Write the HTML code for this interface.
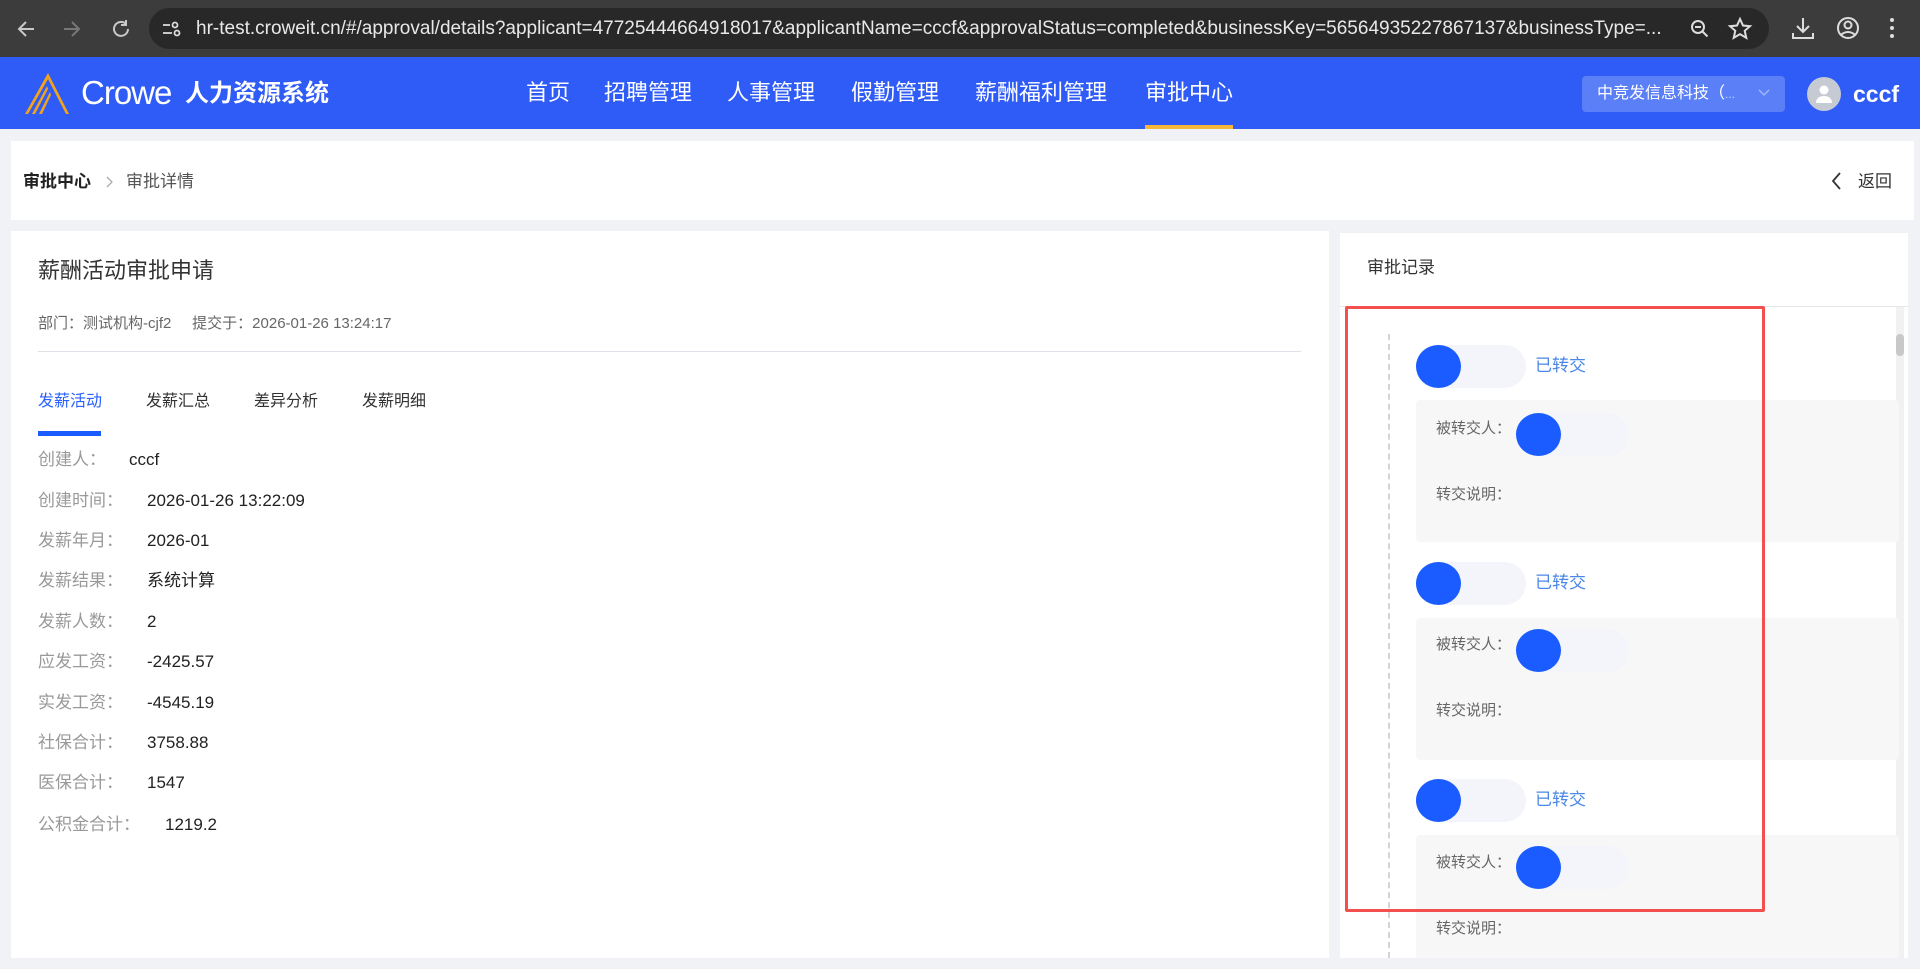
<!DOCTYPE html>
<html><head><meta charset="utf-8"><style>
*{margin:0;padding:0;box-sizing:border-box}
body{width:1920px;height:969px;overflow:hidden;background:#f0f2f5;font-family:"Liberation Sans","Noto Sans CJK SC",sans-serif;position:relative}
.a{position:absolute;white-space:nowrap}
.chrome{left:0;top:0;width:1920px;height:57px;background:#3c3c3c}
.url{left:149px;top:8px;width:1620px;height:41px;border-radius:21px;background:#282828}
.nav{left:0;top:57px;width:1920px;height:72px;background:#2f5bf6}
.mi{top:78px;color:#fff;font-size:22px;line-height:30px}
.card{background:#fff}
.lab{left:38px;color:#999;font-size:17px;line-height:24px}
.val{color:#222;font-size:17px;line-height:24px}
.pill{width:110px;height:43px;border-radius:22px;background:#f3f5fa}
.pill i{position:absolute;left:0;top:0;width:45px;height:43px;border-radius:50%;background:#1a5cff}
.gbox{left:1416px;width:483px;background:#f7f7f7;border-radius:4px}
.gl{color:#666;font-size:15px;line-height:20px}
.st{color:#4a87e6;font-size:17px;line-height:24px}
</style></head><body>
<div class="a chrome"></div>
<svg class="a" style="left:14px;top:16px" width="130" height="26" viewBox="0 0 130 26"><g fill="none" stroke="#c8c8c8" stroke-width="2"><path d="M20 13H6M12 6l-7 7 7 7"/><path d="M50 13h14M58 6l7 7-7 7" stroke="#777"/><path d="M112 8a7 7 0 1 0 2 5M112 4v5h-5"/></g></svg>
<div class="a url"></div>
<svg class="a" style="left:160px;top:18px" width="22" height="22" viewBox="0 0 22 22"><g fill="none" stroke="#ddd" stroke-width="1.8"><path d="M3 7h7M3 15h9"/><circle cx="15" cy="7" r="2.5"/><circle cx="17" cy="15" r="2.5"/></g></svg>
<div class="a" style="left:196px;top:16px;color:#e8e8e8;font-size:19px;line-height:26px">hr-test.croweit.cn/#/approval/details?applicant=47725444664918017&amp;applicantName=cccf&amp;approvalStatus=completed&amp;businessKey=56564935227867137&amp;businessType=...</div>
<svg class="a" style="left:1688px;top:16px" width="100" height="26" viewBox="0 0 100 26"><g fill="none" stroke="#ddd" stroke-width="2"><circle cx="10" cy="11" r="6"/><path d="M14.5 15.5l5 5M7 11h6"/><path d="M52 3l3 6.5 7 .7-5.3 4.6 1.6 7-6.3-3.7-6.3 3.7 1.6-7-5.3-4.6 7-.7z"/></g></svg>
<svg class="a" style="left:1788px;top:14px" width="120" height="30" viewBox="0 0 120 30"><g fill="none" stroke="#ddd" stroke-width="2"><path d="M15 4v14M9 12l6 6 6-6M5 19v5h20v-5"/><circle cx="60" cy="14" r="10"/><circle cx="60" cy="11" r="3.5"/><path d="M53 21c4-4 10-4 14 0"/></g><g fill="#ddd"><circle cx="104" cy="6" r="2"/><circle cx="104" cy="14" r="2"/><circle cx="104" cy="22" r="2"/></g></svg>
<div class="a nav"></div>
<svg class="a" style="left:20px;top:70px" width="56" height="48" viewBox="0 0 56 48"><path d="M28 3L5 44h3L28 9z" fill="#f2a31c"/><path d="M28 3l21 41h-3L28 9z" fill="#f2a31c"/><path d="M27 16L12 44h3L28 19zM30 22L19 44h3L31 25z" fill="#f2a31c"/></svg>
<div class="a" style="left:81px;top:74px;color:#fff;font-size:33px;line-height:38px;letter-spacing:-1px">Crowe</div>
<div class="a" style="left:185px;top:78px;color:#fff;font-size:24px;font-weight:bold;line-height:32px">人力资源系统</div>
<div class="a mi" style="left:526px">首页</div>
<div class="a mi" style="left:604px">招聘管理</div>
<div class="a mi" style="left:727px">人事管理</div>
<div class="a mi" style="left:851px">假勤管理</div>
<div class="a mi" style="left:975px">薪酬福利管理</div>
<div class="a mi" style="left:1145px">审批中心</div>
<div class="a" style="left:1145px;top:125px;width:88px;height:4px;background:#f4b73a"></div>
<div class="a" style="left:1582px;top:76px;width:203px;height:36px;border-radius:4px;background:#5a7ff7"></div>
<div class="a" style="left:1597px;top:83px;color:#fff;font-size:16px;line-height:22px">中竞发信息科技（<span style="color:#c8d3f8;font-size:12px">...</span></div>
<svg class="a" style="left:1757px;top:88px" width="14" height="10" viewBox="0 0 14 10"><path d="M2 2l5 5 5-5" fill="none" stroke="#aabcf6" stroke-width="1.3"/></svg>
<div class="a" style="left:1807px;top:77px;width:34px;height:34px;border-radius:50%;background:#c6cad3"></div>
<svg class="a" style="left:1814px;top:83px" width="20" height="22" viewBox="0 0 20 22"><circle cx="10" cy="7" r="4.5" fill="#fff"/><path d="M2 20c0-5 4-7 8-7s8 2 8 7z" fill="#fff"/></svg>
<div class="a" style="left:1853px;top:79px;color:#fff;font-size:23px;font-weight:bold;line-height:30px">cccf</div>

<div class="a card" style="left:11px;top:141px;width:1903px;height:79px"></div>
<div class="a" style="left:23px;top:170px;color:#222;font-size:17px;font-weight:bold;line-height:24px">审批中心</div>
<svg class="a" style="left:104px;top:175px" width="12" height="14" viewBox="0 0 12 14"><path d="M3 2l5 5-5 5" fill="none" stroke="#aaa" stroke-width="1.3"/></svg>
<div class="a" style="left:126px;top:170px;color:#555;font-size:17px;line-height:24px">审批详情</div>
<svg class="a" style="left:1830px;top:171px" width="14" height="20" viewBox="0 0 14 20"><path d="M10 2L3 10l7 8" fill="none" stroke="#333" stroke-width="1.8"/></svg>
<div class="a" style="left:1858px;top:170px;color:#333;font-size:17px;line-height:24px">返回</div>

<div class="a card" style="left:11px;top:231px;width:1318px;height:727px"></div>
<div class="a" style="left:38px;top:256px;color:#333;font-size:22px;line-height:30px">薪酬活动审批申请</div>
<div class="a" style="left:38px;top:314px;color:#666;font-size:15px;line-height:20px">部门：测试机构-cjf2&nbsp;&nbsp;&nbsp;&nbsp;&nbsp;提交于：2026-01-26 13:24:17</div>
<div class="a" style="left:38px;top:351px;width:1263px;height:1px;background:#dfe1e8"></div>
<div class="a" style="left:38px;top:391px;color:#2962ff;font-size:16px;line-height:22px">发薪活动</div>
<div class="a" style="left:146px;top:391px;color:#333;font-size:16px;line-height:22px">发薪汇总</div>
<div class="a" style="left:254px;top:391px;color:#333;font-size:16px;line-height:22px">差异分析</div>
<div class="a" style="left:362px;top:391px;color:#333;font-size:16px;line-height:22px">发薪明细</div>
<div class="a" style="left:38px;top:431px;width:63px;height:5px;background:#1a5cff"></div>
<div class="a lab" style="top:448px">创建人：</div><div class="a val" style="left:129px;top:448px">cccf</div>
<div class="a lab" style="top:489px">创建时间：</div><div class="a val" style="left:147px;top:489px">2026-01-26 13:22:09</div>
<div class="a lab" style="top:529px">发薪年月：</div><div class="a val" style="left:147px;top:529px">2026-01</div>
<div class="a lab" style="top:569px">发薪结果：</div><div class="a val" style="left:147px;top:569px">系统计算</div>
<div class="a lab" style="top:610px">发薪人数：</div><div class="a val" style="left:147px;top:610px">2</div>
<div class="a lab" style="top:650px">应发工资：</div><div class="a val" style="left:147px;top:650px">-2425.57</div>
<div class="a lab" style="top:691px">实发工资：</div><div class="a val" style="left:147px;top:691px">-4545.19</div>
<div class="a lab" style="top:731px">社保合计：</div><div class="a val" style="left:147px;top:731px">3758.88</div>
<div class="a lab" style="top:771px">医保合计：</div><div class="a val" style="left:147px;top:771px">1547</div>
<div class="a lab" style="top:813px">公积金合计：</div><div class="a val" style="left:165px;top:813px">1219.2</div>

<div class="a card" style="left:1340px;top:233px;width:568px;height:725px"></div>
<div class="a" style="left:1367px;top:256px;color:#333;font-size:17px;line-height:24px">审批记录</div>
<div class="a" style="left:1340px;top:306px;width:568px;height:1px;background:#e4e6ec"></div>
<div class="a" style="left:1896px;top:307px;width:8px;height:651px;background:#f1f1f1"></div>
<div class="a" style="left:1896px;top:334px;width:8px;height:22px;border-radius:4px;background:#c8c8c8"></div>
<div class="a" style="left:1388px;top:334px;height:624px;border-left:2px dashed #d4d4d4"></div>

<div class="a pill" style="left:1416px;top:345px"><i></i></div>
<div class="a st" style="left:1535px;top:354px">已转交</div>
<div class="a gbox" style="top:400px;height:142px"></div>
<div class="a gl" style="left:1436px;top:419px">被转交人：</div>
<div class="a pill" style="left:1516px;top:413px;width:113px"><i></i></div>
<div class="a gl" style="left:1436px;top:485px">转交说明：</div>

<div class="a pill" style="left:1416px;top:562px"><i></i></div>
<div class="a st" style="left:1535px;top:571px">已转交</div>
<div class="a gbox" style="top:618px;height:142px"></div>
<div class="a gl" style="left:1436px;top:635px">被转交人：</div>
<div class="a pill" style="left:1516px;top:629px;width:113px"><i></i></div>
<div class="a gl" style="left:1436px;top:701px">转交说明：</div>

<div class="a pill" style="left:1416px;top:779px"><i></i></div>
<div class="a st" style="left:1535px;top:788px">已转交</div>
<div class="a gbox" style="top:835px;height:123px;border-radius:4px 4px 0 0"></div>
<div class="a gl" style="left:1436px;top:853px">被转交人：</div>
<div class="a pill" style="left:1516px;top:846px;width:113px"><i></i></div>
<div class="a gl" style="left:1436px;top:919px">转交说明：</div>

<div class="a" style="left:1345px;top:306px;width:420px;height:606px;border:3px solid #f24f4f;border-radius:2px"></div>
<div class="a" style="left:0;top:958px;width:1920px;height:11px;background:#f0f2f5"></div>
</body></html>
